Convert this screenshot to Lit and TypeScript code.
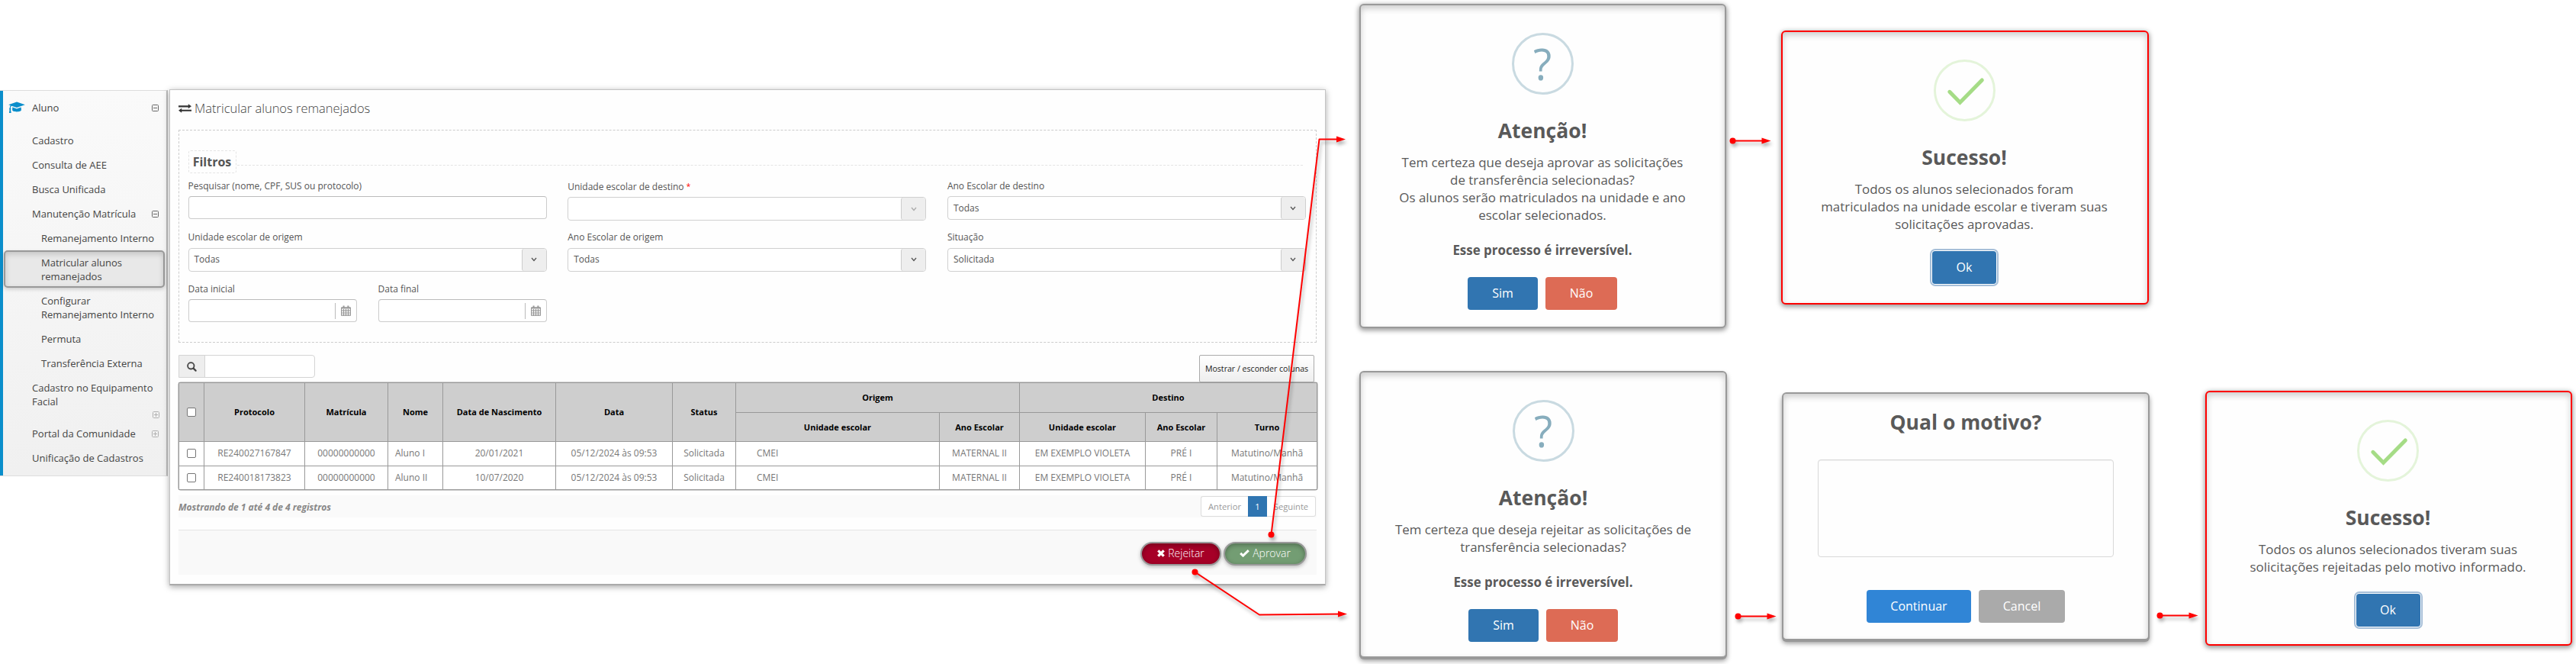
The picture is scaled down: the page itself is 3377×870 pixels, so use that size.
import { LitElement, html, css, svg, nothing, TemplateResult } from "lit";
import { customElement, property } from "lit/decorators.js";
import { classMap } from "lit/directives/class-map.js";

/* ---------- icons ---------- */

const capIcon = svg`<svg class="ico" width="22" height="16" viewBox="0 0 22 16" fill="#0a8ecb">
  <path d="M11 .4 21.8 4.2 11 8 4.2 5.8c-1 .7-1.2 1.7-1.3 3l.7 1-.6.9.7 4.2H.9l.7-4.2-.7-.9.8-1.1c0-1.500.4-2.600 1.100-3.500L.2 4.200z"/>
  <path d="M5.300 7.500 11 9.400l5.600-1.900.3 3.600c0 1.400-2.600 2.400-5.900 2.400s-5.900-1-5.900-2.400z"/></svg>`;

const exchangeIcon = svg`<svg class="ico" width="17" height="12" viewBox="0 0 17 12" fill="#333">
  <path d="M0 2.300h12.800V.2L17 3.300l-4.200 3V4.400H0zM17 7.700H4.200V5.700L0 8.700l4.200 3.100V9.800H17z"/></svg>`;

const calendarIcon = svg`<svg class="ico" width="13" height="14" viewBox="0 0 13 14" fill="none" stroke="#999">
  <path d="M.5 3h12v10.500H.5zM.5 6.500h12M.5 9h12M.5 11.300h12M3.500 5v8.500M6.500 5v8.500M9.500 5v8.500"/>
  <path stroke-width="2" d="M.5 3.500h12M3.600.5v3M9.400.5v3"/></svg>`;

const searchIcon = svg`<svg class="ico" width="13" height="13" viewBox="0 0 13 13" fill="none" stroke="#444">
  <circle cx="5.300" cy="5.300" r="4.200" stroke-width="1.800"/><path stroke-width="2.200" stroke-linecap="round" d="m8.600 8.600 3 3"/></svg>`;

const chevronIcon = svg`<svg class="ico" width="8" height="6" viewBox="0 0 8 6" fill="none" stroke="currentColor" stroke-width="1.300">
  <path d="m1 1 3 3.400L7 1"/></svg>`;

const timesIcon = svg`<svg class="ico" width="10" height="10" viewBox="0 0 10 10" stroke="#fff" stroke-width="3.300">
  <path d="m1.300 1.300 7.400 7.400M8.700 1.300 1.300 8.700"/></svg>`;

const checkIcon = svg`<svg class="ico" width="13" height="10" viewBox="0 0 13 10" fill="none" stroke="#fff" stroke-width="3">
  <path d="m1.200 4.800 3.400 3.300L11.800 1.200"/></svg>`;

const toggleIcon = (open: boolean) => svg`<svg class="toggle" width="9" height="9" viewBox="0 0 9 9" fill="none" stroke=${open ? "#666" : "#b0b0b0"}>
  <rect x=".5" y=".5" width="8" height="8" rx="1"/><path d=${open ? "M2 4.500h5" : "M2 4.500h5M4.500 2v5"}/></svg>`;

/* ---------- sidebar ---------- */

interface MenuItem {
  text: TemplateResult | string;
  sub?: boolean;
  active?: boolean;
  open?: boolean;
  hang?: boolean;
}

const MENU: MenuItem[] = [
  { text: "Cadastro" },
  { text: "Consulta de AEE" },
  { text: "Busca Unificada" },
  { text: "Manutenção Matrícula", open: true },
  { text: "Remanejamento Interno", sub: true },
  { text: html`Matricular alunos<br>remanejados`, sub: true, active: true },
  { text: html`Configurar<br>Remanejamento Interno`, sub: true },
  { text: "Permuta", sub: true },
  { text: "Transferência Externa", sub: true },
  { text: html`Cadastro no Equipamento<br>Facial`, open: false, hang: true },
  { text: "Portal da Comunidade", open: false },
  { text: "Unificação de Cadastros" },
];

@customElement("side-menu")
export class SideMenu extends LitElement {
  static styles = css`
    :host { display: block; box-sizing: border-box; border-top: 1px solid #dcdcdc; border-right: 2px solid #bdbdbd;
      border-bottom: 1px solid #ddd; background: linear-gradient(#fafafa, #f0f0f0);
      font: 13px/18px "Open Sans", sans-serif; color: #444; }
    .bar { box-sizing: border-box; height: 100%; border-left: 4px solid #0a8ecb; }
    .head { display: flex; align-items: center; height: 44px; margin-bottom: 5px; padding: 0 10px 0 7px; }
    .head span { flex: 1; padding-left: 9px; }
    .item { box-sizing: border-box; display: flex; align-items: center; justify-content: space-between;
      margin: 0 2px 0 1px; padding: 7px 8px 7px 37px; white-space: nowrap; }
    .sub { padding-left: 49px; padding-right: 0; }
    .hang { height: 60px; align-items: flex-start; }
    .hang .toggle { align-self: flex-end; margin-bottom: -3px; }
    .active { height: 49px; margin-bottom: 1px; padding: 5px 0 5px 47px; border: 2px solid #999; border-radius: 5px;
      background: #e8e8e8; box-shadow: inset 0 3px 7px rgba(0,0,0,.16), 0 2px 5px rgba(0,0,0,.18); }
    .ico, .toggle { display: block; flex: none; }
  `;
  render() {
    return html`<div class="bar">
      <div class="head">${capIcon}<span>Aluno</span>${toggleIcon(true)}</div>
      ${MENU.map((m) => html`<div class=${classMap({ item: true, sub: !!m.sub, active: !!m.active, hang: !!m.hang })}>
        <span>${m.text}</span>${m.open === undefined ? nothing : toggleIcon(m.open)}</div>`)}
    </div>`;
  }
}

/* ---------- main panel ---------- */

const COLS = [33, 132, 109, 72, 148, 153, 83, 267, 105, 165, 94, 131];

const STUDENTS = [
  ["RE240027167847", "00000000000", "Aluno I", "20/01/2021", "05/12/2024 às 09:53", "Solicitada", "CMEI", "MATERNAL II", "EM EXEMPLO VIOLETA", "PRÉ I", "Matutino/Manhã"],
  ["RE240018173823", "00000000000", "Aluno II", "10/07/2020", "05/12/2024 às 09:53", "Solicitada", "CMEI", "MATERNAL II", "EM EXEMPLO VIOLETA", "PRÉ I", "Matutino/Manhã"],
];

@customElement("enroll-panel")
export class EnrollPanel extends LitElement {
  static styles = css`
    :host { display: block; box-sizing: border-box; border: 1px solid #c4c4c4; border-bottom: 2px solid #aaa; padding: 0 11px;
      background: #fefefe; box-shadow: 0 2px 8px rgba(0,0,0,.35); font: 12px/18px "Open Sans", sans-serif; color: #555; white-space: nowrap; }
    .ico { display: block; flex: none; }
    .title { display: flex; align-items: center; gap: 4px; height: 48px; margin-bottom: 4px; font-weight: 300; font-size: 16.500px; color: #444; }
    .filters { box-sizing: border-box; height: 279px; border: 1px dashed #ccc; padding: 26px 12px 0 11.500px; }
    .legend { display: flex; }
    .legend b { box-sizing: border-box; width: 63px; height: 30px; border: 1px dashed #e4e4e4; border-radius: 3px; font-size: 16px; line-height: 28px; text-align: center; }
    .legend i { flex: 1; height: 0; margin: 19px 5px 0 1px; border-top: 1px dashed #e4e4e4; }
    .grid { display: grid; grid-template-columns: repeat(3, 470px); grid-auto-rows: 67.700px; column-gap: 27.700px; margin-top: 7.500px; }
    .field { display: flex; flex-direction: column; gap: 4.500px; }
    .req { color: red; font-size: 10px; vertical-align: 1px; }
    .dates { display: grid; grid-template-columns: 221px 221px; gap: 28px; }
    .box { box-sizing: border-box; display: flex; align-items: center; height: 30px; border: 1px solid #ccc; border-top-color: #bbb; border-radius: 4px; background: #fff; }
    .select { height: 31px; border-color: #d0d0d0; }
    .select span { flex: 1; padding-left: 7px; }
    .arrow { display: flex; align-items: center; justify-content: center; width: 31px; height: 29px; border-left: 1px solid #ccc; border-radius: 3px; background: #eee; color: #555; }
    .dim { color: #aaa; }
    .cal { justify-content: flex-end; }
    .cal div { height: 21px; display: flex; align-items: center; border-left: 1px solid #bbb; padding: 0 7px 0 7px; }
    .tools { display: flex; justify-content: space-between; align-items: flex-start; height: 36px; margin-top: 16px; padding-right: 3px; }
    .find { box-sizing: border-box; display: flex; width: 179px; height: 30px; border: 1px solid #d4d4d4; border-radius: 0 4px 4px 0; background: #fff; }
    .find div { display: flex; align-items: center; justify-content: center; width: 33px; border-right: 1px solid #d4d4d4; background: #eee; }
    .cols { box-sizing: border-box; width: 151px; height: 36px; border: 1px solid #aaa; border-radius: 2px; background: linear-gradient(#fff, #eee);
      font-size: 10.600px; line-height: 35px; text-align: center; color: #222; }
    .list { height: 148px; }
    table { width: 1492px; height: 141px; table-layout: fixed; border-collapse: collapse; border-top: 1px solid #aaa; box-shadow: 0 0 0 .500px #999; border-radius: 3px; }
    th { height: 38px; padding: 0; border: 1px solid #999; background: #cecece; color: #000; font-size: 11px; font-weight: 700; }
    .second th { height: 37px; }
    td { height: 30px; padding: 0; border: 1px solid #999; border-left-width: 1.500px; background: #fff; text-align: center; color: #777; }
    td.left { text-align: left; padding-left: 9px; }
    td.wide { text-align: left; padding-left: 27px; }
    .check { box-sizing: border-box; width: 12px; height: 12px; margin: 0 auto; border: 1.200px solid #777; border-radius: 2px; background: #fff; }
    .info { display: flex; justify-content: space-between; align-items: flex-start; height: 29px; background: #fafafa; }
    .info em { font-weight: 700; color: #888; line-height: 32px; }
    .pages { display: flex; margin: 1px 1px 0 0; font-size: 11.200px; line-height: 25px; color: #999; text-align: center; }
    .pages span { box-sizing: border-box; height: 27px; border: 1px solid #ddd; background: #fff; width: 62px; }
    .pages .prev { border-right: 0; border-radius: 3px 0 0 3px; }
    .pages .next { border-left: 0; width: 64px; border-radius: 0 3px 3px 0; }
    .pages .cur { width: 25px; border-color: #2f75b1; background: #2f75b1; color: #fff; }
    .actions { box-sizing: border-box; display: flex; justify-content: flex-end; gap: 3px; height: 59px; margin-top: 16px; padding: 15px 13px 0 0; border-top: 1px solid #e4e4e4; background: #f9f9f9; }
    .btn { box-sizing: border-box; display: flex; align-items: center; justify-content: center; gap: 4px; width: 106px; height: 31px; padding-bottom: 1px;
      border: 2px solid #999; border-radius: 16px; background: #a60027; color: #fff; font-size: 14px; font-weight: 300;
      box-shadow: inset 0 2px 6px rgba(0,0,0,.3), 0 2px 5px rgba(0,0,0,.25); }
    .ok { width: 109px; background: #739d73; }
  `;

  private select(label: string, value: string, required = false, dim = false) {
    return html`<div class="field"><div>${label}${required ? html` <span class="req">*</span>` : nothing}</div>
      <div class="box select"><span>${value}</span><div class=${classMap({ arrow: true, dim })}>${chevronIcon}</div></div></div>`;
  }

  private date(label: string) {
    return html`<div class="field"><div>${label}</div><div class="box cal"><div>${calendarIcon}</div></div></div>`;
  }

  render() {
    const cls = (i: number) => (i === 2 ? "left" : i === 6 ? "wide" : "");
    return html`
      <div class="title">${exchangeIcon}<span>Matricular alunos remanejados</span></div>
      <div class="filters">
        <div class="legend"><b>Filtros</b><i></i></div>
        <div class="grid">
          <div class="field"><div>Pesquisar (nome, CPF, SUS ou protocolo)</div><div class="box"></div></div>
          ${this.select("Unidade escolar de destino", "", true, true)}
          ${this.select("Ano Escolar de destino", "Todas")}
          ${this.select("Unidade escolar de origem", "Todas")}
          ${this.select("Ano Escolar de origem", "Todas")}
          ${this.select("Situação", "Solicitada")}
          <div class="dates">${this.date("Data inicial")}${this.date("Data final")}</div>
        </div>
      </div>
      <div class="tools">
        <div class="find"><div>${searchIcon}</div></div>
        <div class="cols">Mostrar / esconder colunas</div>
      </div>
      <div class="list">
        <table>
          <colgroup>${COLS.map((w) => html`<col style="width:${w}px">`)}</colgroup>
          <thead>
            <tr>
              <th rowspan="2"><div class="check"></div></th>
              ${["Protocolo", "Matrícula", "Nome", "Data de Nascimento", "Data", "Status"].map((h) => html`<th rowspan="2">${h}</th>`)}
              <th colspan="2">Origem</th><th colspan="3">Destino</th>
            </tr>
            <tr class="second">${["Unidade escolar", "Ano Escolar", "Unidade escolar", "Ano Escolar", "Turno"].map((h) => html`<th>${h}</th>`)}</tr>
          </thead>
          <tbody>${STUDENTS.map((r) => html`<tr><td><div class="check"></div></td>${r.map((c, i) => html`<td class=${cls(i)}>${c}</td>`)}</tr>`)}</tbody>
        </table>
      </div>
      <div class="info">
        <em>Mostrando de 1 até 4 de 4 registros</em>
        <div class="pages"><span class="prev">Anterior</span><span class="cur">1</span><span class="next">Seguinte</span></div>
      </div>
      <div class="actions">
        <div class="btn">${timesIcon}<span>Rejeitar</span></div>
        <div class="btn ok">${checkIcon}<span>Aprovar</span></div>
      </div>`;
  }
}

/* ---------- dialogs ---------- */

interface DialogButton { label: string; kind: string; width: number; }

@customElement("alert-dialog")
export class AlertDialog extends LitElement {
  @property() icon = "";
  @property() heading = "";
  @property({ attribute: false }) body: TemplateResult | null = null;
  @property({ attribute: false }) buttons: DialogButton[] = [];
  @property({ type: Number }) gap = 10;

  static styles = css`
    :host { box-sizing: border-box; display: flex; flex-direction: column; align-items: center; border: 2px solid #999; border-radius: 6px;
      background: #fefefe; padding-top: 35.500px; font: 17px/23px "Open Sans", sans-serif; color: #595959; white-space: nowrap;
      box-shadow: inset 0 4px 8px rgba(0,0,0,.2), 0 2px 6px 1px rgba(0,0,0,.4); }
    :host(.red) { border-color: #f00; padding-right: 2px; }
    :host(.lip) { box-shadow: inset 0 4px 8px rgba(0,0,0,.2), 0 2px 0 0 #999, 0 4px 6px rgba(0,0,0,.4); }
    .ring { box-sizing: border-box; flex: none; width: 81px; height: 81px; border: 3px solid #c9dae1; border-radius: 50%; margin-bottom: 28.500px;
      color: #87adbd; font-size: 56px; line-height: 75px; text-align: center; }
    .mark { display: block; flex: none; margin-bottom: 28.500px; }
    .heading { font-size: 26.500px; font-weight: 700; line-height: 38px; }
    .body { margin-top: 11px; text-align: center; font-size: 16.920px; }
    .area { box-sizing: border-box; width: 388px; height: 128px; margin: 30px 0 18.500px; border: 1px solid #d9d9d9; border-radius: 4px; box-shadow: inset 0 1px 1px rgba(0,0,0,.06); }
    .row { display: flex; margin-top: 24px; }
    .btn { height: 43px; border-radius: 4px; color: #fff; font-size: 16px; line-height: 42px; text-align: center; background: #3175b1; }
    .no { background: #dd6b55; }
    .go { background: #3085d6; }
    .grey { background: #aaa; }
    .focus { box-shadow: 0 0 0 1px #fff, 0 0 0 3px #a7bfd8; }
  `;

  render() {
    const mark = this.icon === "question"
      ? html`<div class="ring">?</div>`
      : this.icon === "success"
        ? html`<svg class="mark" width="81" height="81" viewBox="0 0 81 81" fill="none">
            <circle cx="40.500" cy="40.500" r="39" stroke="#e4f4da" stroke-width="3"/>
            <path d="M20.800 42.300 34.500 56.300 63.300 27" stroke="#a5dc86" stroke-width="5" stroke-linecap="round"/></svg>`
        : nothing;
    return html`${mark}
      <div class="heading">${this.heading}</div>
      ${this.body ? html`<div class="body">${this.body}</div>` : html`<div class="area"></div>`}
      <div class="row" style="gap:${this.gap}px">${this.buttons.map((b) => html`<div class="btn ${b.kind}" style="width:${b.width}px">${b.label}</div>`)}</div>`;
  }
}

/* ---------- flow canvas ---------- */

const YES_NO: DialogButton[] = [{ label: "Sim", kind: "", width: 92 }, { label: "Não", kind: "no", width: 94 }];
const OK: DialogButton[] = [{ label: "Ok", kind: "focus", width: 84 }];
const PROMPT: DialogButton[] = [{ label: "Continuar", kind: "go", width: 137 }, { label: "Cancel", kind: "grey", width: 113 }];

const ARROWS: [number, number][][] = [
  [[1666.5, 700.5], [1729.5, 182.5], [1764, 182.5]],
  [[1566.5, 749.5], [1651, 805.5], [1766, 804.5]],
  [[2271.5, 184.5], [2321.5, 184.5]],
  [[2278.5, 807.5], [2328.5, 807.5]],
  [[2831.5, 806.5], [2881.5, 806.5]],
];

@customElement("app-root")
export class AppRoot extends LitElement {
  static styles = css`
    :host { display: block; position: relative; width: 3377px; height: 870px; overflow: hidden; background: #fff; }
    side-menu, enroll-panel, alert-dialog, .links { position: absolute; }
    side-menu { left: 0; top: 118px; width: 220px; height: 506px; }
    enroll-panel { left: 222px; top: 117px; width: 1516px; height: 650px; }
    .approve { left: 1782px; top: 5px; width: 481px; height: 425px; padding-right: 1px; }
    .approved { left: 2335px; top: 40px; width: 482px; height: 359px; }
    .reject { left: 1782px; top: 486px; width: 482px; height: 376px; }
    .reason { left: 2336px; top: 514px; width: 482px; height: 325px; padding-top: 18px; }
    .rejected { left: 2891px; top: 512px; width: 481px; height: 334px; }
    .links { left: 0; top: 0; filter: drop-shadow(2px 4px 2px rgba(0,0,0,.3)); }
  `;

  render() {
    return html`
      <side-menu></side-menu>
      <enroll-panel></enroll-panel>
      <alert-dialog class="approve" icon="question" heading="Atenção!" .buttons=${YES_NO}
        .body=${html`Tem certeza que deseja aprovar as solicitações<br>de transferência selecionadas?<br>Os alunos serão matriculados na unidade e ano<br>escolar selecionados.<br><br><b>Esse processo é irreversível.</b>`}></alert-dialog>
      <alert-dialog class="approved red" icon="success" heading="Sucesso!" .buttons=${OK}
        .body=${html`Todos os alunos selecionados foram<br>matriculados na unidade escolar e tiveram suas<br>solicitações aprovadas.`}></alert-dialog>
      <alert-dialog class="reject lip" icon="question" heading="Atenção!" .buttons=${YES_NO}
        .body=${html`Tem certeza que deseja rejeitar as solicitações de<br>transferência selecionadas?<br><br><b>Esse processo é irreversível.</b>`}></alert-dialog>
      <alert-dialog class="reason lip" heading="Qual o motivo?" .buttons=${PROMPT}></alert-dialog>
      <alert-dialog class="rejected red" icon="success" heading="Sucesso!" .buttons=${OK}
        .body=${html`Todos os alunos selecionados tiveram suas<br>solicitações rejeitadas pelo motivo informado.`}></alert-dialog>
      <svg class="links" width="3377" height="870" viewBox="0 0 3377 870" fill="none" stroke="#f00" stroke-width="2">
        ${ARROWS.map((pts) => {
          const [x, y] = pts[pts.length - 1];
          const line = [...pts.slice(0, -1), [x - 8, y]].map((p) => p.join(",")).join(" ");
          return svg`<polyline points=${line} stroke-linejoin="round"/>
            <circle cx=${pts[0][0]} cy=${pts[0][1]} r="4" fill="#f00" stroke="none"/>
            <polygon points="${x - 12},${y - 4} ${x},${y} ${x - 12},${y + 4}" fill="#f00" stroke="none"/>`;
        })}
      </svg>`;
  }
}
